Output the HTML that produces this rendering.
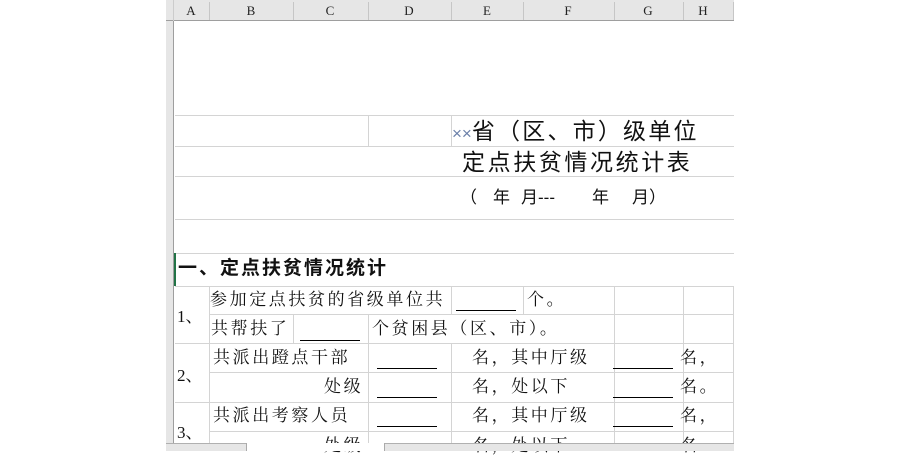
<!DOCTYPE html><html><head><meta charset="utf-8"><style>
body{margin:0;width:900px;height:451px;overflow:hidden;background:#fff;position:relative;font-family:"Liberation Serif","Noto Serif CJK SC",serif}
div{position:absolute;box-sizing:border-box}
.h{background:#d4d4d4;height:1px}
.v{background:#d4d4d4;width:1px}
.t{white-space:nowrap;font-size:17px;letter-spacing:2.6px;color:#111;line-height:20px}
.d{white-space:nowrap;font-size:17px;color:#111;line-height:20px;top:188px;font-family:'Liberation Sans','Noto Sans CJK SC',sans-serif}
.u{height:1px;background:#000}
.cl{top:3px;font-size:13px;color:#222;width:20px;text-align:center;font-family:"Liberation Serif",serif}
</style></head><body>
<div style="left:166px;top:0;width:568px;height:21px;background:#e6e6e6;border-bottom:1px solid #9e9e9e"></div>
<div style="left:166px;top:21px;width:8px;height:423px;background:#e6e6e6;border-right:1px solid #9e9e9e"></div>
<div style="left:166px;top:0;width:8px;height:21px;border-right:1px solid #ccc"></div>
<div class="v" style="left:209px;top:2px;height:18px;background:#c6c6c6"></div>
<div class="v" style="left:293px;top:2px;height:18px;background:#c6c6c6"></div>
<div class="v" style="left:368px;top:2px;height:18px;background:#c6c6c6"></div>
<div class="v" style="left:451px;top:2px;height:18px;background:#c6c6c6"></div>
<div class="v" style="left:523px;top:2px;height:18px;background:#c6c6c6"></div>
<div class="v" style="left:614px;top:2px;height:18px;background:#c6c6c6"></div>
<div class="v" style="left:683px;top:2px;height:18px;background:#c6c6c6"></div>
<div class="v" style="left:733px;top:2px;height:18px;background:#c6c6c6"></div>
<div class="cl" style="left:181px">A</div><div class="cl" style="left:241px">B</div><div class="cl" style="left:320px">C</div><div class="cl" style="left:399px">D</div><div class="cl" style="left:477px">E</div><div class="cl" style="left:558px">F</div><div class="cl" style="left:638px">G</div><div class="cl" style="left:693px">H</div>
<div class="h" style="left:175px;top:115px;width:559px"></div>
<div class="h" style="left:175px;top:146px;width:559px"></div>
<div class="h" style="left:175px;top:176px;width:559px"></div>
<div class="h" style="left:175px;top:219px;width:559px"></div>
<div class="h" style="left:175px;top:253px;width:559px"></div>
<div class="h" style="left:175px;top:286px;width:559px"></div>
<div class="h" style="left:209px;top:314px;width:525px"></div>
<div class="h" style="left:175px;top:343px;width:559px"></div>
<div class="h" style="left:209px;top:372px;width:525px"></div>
<div class="h" style="left:175px;top:402px;width:559px"></div>
<div class="h" style="left:209px;top:431px;width:525px"></div>
<div class="v" style="left:368px;top:115px;height:31px"></div>
<div class="v" style="left:451px;top:115px;height:31px"></div>
<div style="left:174px;top:253px;width:2px;height:33px;background:#217346"></div>
<div class="v" style="left:209px;top:286px;height:158px"></div>
<div class="v" style="left:293px;top:314px;height:29px"></div>
<div class="v" style="left:368px;top:314px;height:130px"></div>
<div class="v" style="left:451px;top:286px;height:28px"></div>
<div class="v" style="left:451px;top:343px;height:101px"></div>
<div class="v" style="left:523px;top:286px;height:28px"></div>
<div class="v" style="left:614px;top:286px;height:158px"></div>
<div class="v" style="left:683px;top:286px;height:158px"></div>
<div class="v" style="left:733px;top:286px;height:158px"></div>
<div class="t" style="left:452px;top:118px;font-size:23px;line-height:27px;letter-spacing:2.2px;font-family:'Liberation Sans','Noto Sans CJK SC',sans-serif"><span style="color:#6a7fa8;font-size:17px;letter-spacing:0">××</span>省（区、市）级单位</div>
<div class="t" style="left:462px;top:149px;font-size:23px;line-height:27px;letter-spacing:2.6px;font-family:'Liberation Sans','Noto Sans CJK SC',sans-serif">定点扶贫情况统计表</div>
<div class="d" style="left:460px">（</div>
<div class="d" style="left:493px">年</div>
<div class="d" style="left:521px">月---</div>
<div class="d" style="left:592px">年</div>
<div class="d" style="left:632px">月）</div>
<div class="t" style="left:178px;top:259px;font-size:19px;font-weight:bold;letter-spacing:2px;font-family:'Liberation Sans','Noto Sans CJK SC',sans-serif">一、定点扶贫情况统计</div>
<div class="t" style="left:210px;top:290px">参加定点扶贫的省级单位共</div>
<div class="u" style="left:456px;top:310px;width:60px"></div>
<div class="t" style="left:527px;top:290px">个。</div>
<div class="t" style="left:177px;top:307px;letter-spacing:0">1、</div>
<div class="t" style="left:211px;top:319px">共帮扶了</div>
<div class="u" style="left:300px;top:340px;width:60px"></div>
<div class="t" style="left:372px;top:319px">个贫困县（区、市）。</div>
<div class="t" style="left:213px;top:348px">共派出蹬点干部</div>
<div class="u" style="left:377px;top:368px;width:60px"></div>
<div class="t" style="left:472px;top:348px">名，其中厅级</div>
<div class="u" style="left:613px;top:368px;width:60px"></div>
<div class="t" style="left:680px;top:348px">名，</div>
<div class="t" style="left:177px;top:366px;letter-spacing:0">2、</div>
<div class="t" style="left:324px;top:377px">处级</div>
<div class="u" style="left:377px;top:397px;width:60px"></div>
<div class="t" style="left:472px;top:377px">名，处以下</div>
<div class="u" style="left:613px;top:397px;width:60px"></div>
<div class="t" style="left:680px;top:377px">名。</div>
<div class="t" style="left:213px;top:406px">共派出考察人员</div>
<div class="u" style="left:377px;top:426px;width:60px"></div>
<div class="t" style="left:472px;top:406px">名，其中厅级</div>
<div class="u" style="left:613px;top:426px;width:60px"></div>
<div class="t" style="left:680px;top:406px">名，</div>
<div class="t" style="left:177px;top:423px;letter-spacing:0">3、</div>
<div class="t" style="left:324px;top:436px">处级</div>
<div class="t" style="left:472px;top:436px">名，处以下</div>
<div class="t" style="left:680px;top:436px">名</div>
<div style="left:166px;top:443px;width:568px;height:8px;background:#e6e6e6;border-top:1px solid #b0b0b0"></div>
<div style="left:246px;top:443px;width:139px;height:8px;background:#fff;border-left:1px solid #aaa;border-right:1px solid #aaa"></div>
</body></html>
